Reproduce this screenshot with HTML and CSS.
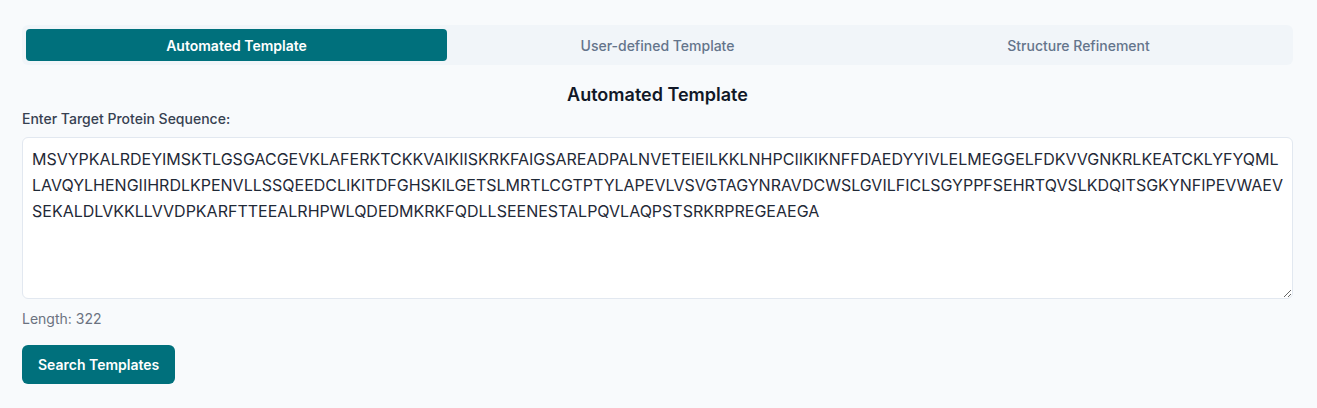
FILE: index.html
```html
<!DOCTYPE html>
<html>
<head>
<meta charset="utf-8">
<link rel="stylesheet" href="styles.css">
</head>
<body>
<div class="page">
  <div class="tabs">
    <div class="tab active">Automated Template</div>
    <div class="tab">User-defined Template</div>
    <div class="tab">Structure Refinement</div>
  </div>
  <h2 class="title">Automated Template</h2>
  <label class="label" for="seq">Enter Target Protein Sequence:</label>
  <textarea id="seq" class="seq">MSVYPKALRDEYIMSKTLGSGACGEVKLAFERKTCKKVAIKIISKRKFAIGSAREADPALNVETEIEILKKLNHPCIIKIKNFFDAEDYYIVLELMEGGELFDKVVGNKRLKEATCKLYFYQMLLAVQYLHENGIIHRDLKPENVLLSSQEEDCLIKITDFGHSKILGETSLMRTLCGTPTYLAPEVLVSVGTAGYNRAVDCWSLGVILFICLSGYPPFSEHRTQVSLKDQITSGKYNFIPEVWAEVSEKALDLVKKLLVVDPKARFTTEEALRHPWLQDEDMKRKFQDLLSEENESTALPQVLAQPSTSRKRPREGEAEGA</textarea>
  <div class="length">Length: 322</div>
  <button class="btn">Search Templates</button>
</div>
</body>
</html>
```

FILE: styles.css
```css
html, body {
  margin: 0;
  padding: 0;
  background: #f8fafc;
  font-family: Inter, "Noto Sans", sans-serif;
}
.page {
  padding: 25px 24px 0 22px;
  display: flex;
  flex-direction: column;
}
.tabs {
  display: grid;
  grid-template-columns: 1fr 1fr 1fr;
  background: #f1f5f9;
  border-radius: 6px;
  padding: 4px;
  height: 32px;
}
.tab {
  display: flex;
  align-items: center;
  justify-content: center;
  font-size: 14px;
  font-weight: 500;
  color: #64748b;
  border-radius: 4px;
}
.tab.active {
  background: #00707c;
  color: #ffffff;
  font-weight: 600;
}
.title {
  margin: 16px 0 0;
  text-align: center;
  font-size: 18px;
  font-weight: 600;
  color: #111827;
  line-height: 28px;
}
.label {
  font-size: 14px;
  font-weight: 500;
  color: #374151;
  line-height: 20px;
}
.seq {
  margin-top: 8px;
  box-sizing: border-box;
  height: 162px;
  width: 100%;
  border: 1px solid #e2e8f0;
  border-radius: 6px;
  background: #ffffff;
  padding: 8px 9px;
  font-family: Inter, "Noto Sans", sans-serif;
  font-size: 16px;
  line-height: 26px;
  color: #1f2937;
  resize: vertical;
  outline: none;
  display: block;
}
.length {
  margin-top: 10px;
  font-size: 14px;
  color: #6b7280;
  line-height: 20px;
}
.btn {
  align-self: flex-start;
  margin-top: 16px;
  height: 39px;
  padding: 0 16px;
  border: none;
  border-radius: 6px;
  background: #00707c;
  color: #ffffff;
  font-family: Inter, "Noto Sans", sans-serif;
  font-size: 14px;
  font-weight: 600;
}
```
